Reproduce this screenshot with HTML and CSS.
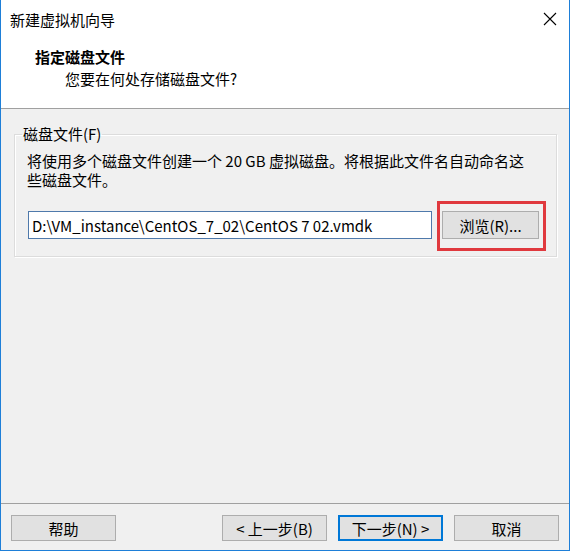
FILE: index.html
```html
<!DOCTYPE html>
<html>
<head>
  <meta charset="UTF-8">
  <title>新建虚拟机向导</title>
  <link rel="stylesheet" href="styles.css">
</head>
<body>
  <div class="window">
    <div class="titlebar">
      <span class="title">新建虚拟机向导</span>
      <svg class="close" width="14" height="14" viewBox="0 0 14 14">
        <path d="M1 1 L13 13 M13 1 L1 13" stroke="#000" stroke-width="1.1" fill="none"/>
      </svg>
    </div>
    <div class="header">
      <h1>指定磁盘文件</h1>
      <p>您要在何处存储磁盘文件?</p>
    </div>
    <div class="content">
      <fieldset class="group">
        <legend>磁盘文件(F)</legend>
        <p class="desc">将使用多个磁盘文件创建一个 20 GB 虚拟磁盘。将根据此文件名自动命名这些磁盘文件。</p>
        <div class="row">
          <input type="text" class="path" value="D:\VM_instance\CentOS_7_02\CentOS 7 02.vmdk">
          <div class="mark">
            <button class="btn browse">浏览(R)...</button>
          </div>
        </div>
      </fieldset>
    </div>
    <div class="footer">
      <button class="btn help">帮助</button>
      <button class="btn">&lt; 上一步(B)</button>
      <button class="btn focus">下一步(N) &gt;</button>
      <button class="btn">取消</button>
    </div>
  </div>
</body>
</html>
```

FILE: styles.css
```css
body { margin: 0; font-family: "Noto Sans CJK SC", "Noto Sans", sans-serif; font-size: 15px; color: #000; background: #fff; }
.window { width: 570px; height: 551px; box-sizing: border-box; border: 1px solid #1e7fd8; border-top: none; background: #f0f0f0; display: flex; flex-direction: column; }
.titlebar { height: 39px; background: #fff; display: flex; align-items: center; justify-content: space-between; padding: 0 12px 0 9px; }
.title { line-height: 20px; }
.close { margin-top: -1px; }
.header { height: 70px; background: #fff; border-bottom: 1px solid #a0a0a0; padding: 8px 0 0 34px; box-sizing: border-box; }
.header h1 { margin: 0; font-size: 15px; font-weight: bold; line-height: 20px; }
.header p { margin: 2px 0 0 30px; line-height: 20px; }
.content { flex: 1; padding: 15px 12px 0 13px; }
.group { margin: 0; border: 1px solid #dcdcdc; box-shadow: inset 1px 1px 0 #fff, 1px 1px 0 #fff; padding: 7px 8px 5px 12px; }
.group legend { padding: 0 1px; margin-left: -5px; line-height: 20px; }
.desc { margin: 0; line-height: 19px; max-width: 500px; }
.row { display: flex; align-items: flex-start; margin-top: 12px; }
.path { width: 404px; height: 28px; box-sizing: border-box; margin: 10px 0 0 1px; border: 1px solid #4f79ab; padding: 0 3px; font: inherit; color: #000; background: #fff; }
.mark { margin-left: 5px; border: 3px solid #e0393e; padding: 7px 4px 9px 2px; }
.btn { height: 26px; width: 105px; box-sizing: border-box; border: 1px solid #adadad; background: #e1e1e1; font: inherit; color: #000; padding: 0; }
.browse { width: 97px; height: 28px; }
.footer { border-top: 1px solid #a0a0a0; display: flex; gap: 11px; padding: 11px 10px 0 10px; height: 47px; box-sizing: border-box; }
.help { margin-right: auto; }
.focus { border: 2px solid #0078d7; }
```
